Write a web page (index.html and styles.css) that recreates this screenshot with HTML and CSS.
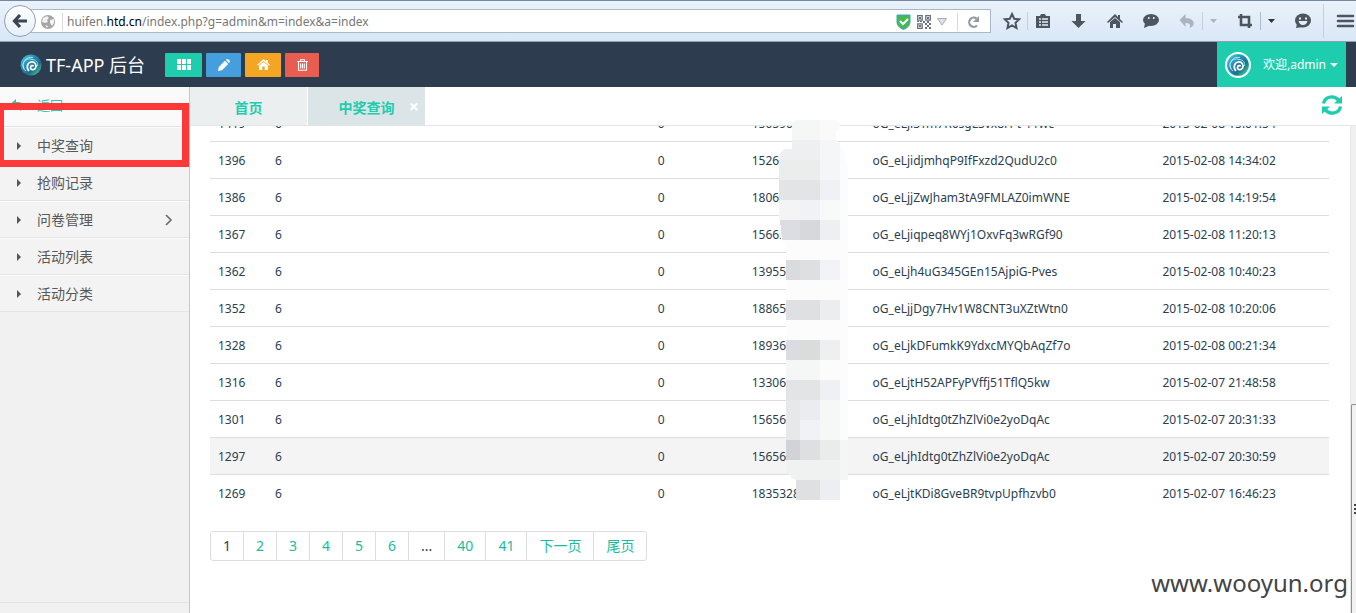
FILE: index.html
```html
<!DOCTYPE html>
<html lang="zh-CN">
<head>
<meta charset="utf-8">
<title>TF-APP 后台</title>
<link rel="stylesheet" href="styles.css">
</head>
<body>
<svg class="defs" aria-hidden="true">
  <defs>
    <linearGradient id="swirl" x1="0" y1="0" x2="1" y2="1"><stop offset="0" stop-color="#46d8e0"/><stop offset=".4" stop-color="#2a86b8"/><stop offset=".65" stop-color="#1d6f8c"/><stop offset="1" stop-color="#4fe0a0"/></linearGradient>
    <symbol id="logo" viewBox="0 0 22 22">
      <circle cx="11" cy="11" r="10.5" fill="url(#swirl)"/>
      <path d="M4 15A8 8 0 0 1 13 3.400M6 17A6.500 6.500 0 0 1 12 5.500c4 0 6 3 5.600 6.500" fill="none" stroke="#9cecea" stroke-width="1"/>
      <path d="M9 17c-3-3-2-8 2-9 4-.6 6 3 4.500 6-1.500 2.500-5 2-5-.5 0-2 2.500-2.500 3-1" fill="none" stroke="#fff" stroke-width="1.700"/>
    </symbol>
  </defs>
</svg>

<div class="browser">
  <button class="back" aria-label="后退"><svg width="16" height="16" viewBox="0 0 16 16"><path d="M8 2 2.500 8 8 14M3 8h12" fill="none" stroke="#3d4650" stroke-width="3.200"/></svg></button>
  <div class="address">
    <svg width="16" height="16" viewBox="0 0 16 16"><circle cx="8" cy="8" r="7" fill="#a5a5a5"/><path d="M3 4l4-2 2 2-2 2 1 2-3 1-3-1zM10 6l4-1v4l-2 3-2-3zM5 11l3 1-1 2z" fill="#f2f2f2"/></svg>
    <span class="rule"></span>
    <a class="url" href="#">huifen.<b>htd.cn</b>/index.php?g=admin&amp;m=index&amp;a=index</a>
    <svg width="15" height="16" viewBox="0 0 15 16"><path d="M1 1h13v7q0 5-6.500 7.500Q1 13 1 8z" fill="#46b850" stroke="#3aa5c8"/><path d="m4 7 3 3 5-5" fill="none" stroke="#fff" stroke-width="2"/></svg>
    <svg width="14" height="14" viewBox="0 0 14 14"><path d="M.7.700h4.500v4.500H.7zM8.800.700h4.500v4.500H8.800zM.7 8.800h4.500v4.500H.7z" fill="none" stroke="#68707c" stroke-width="1.300"/><path d="M2 2h2v2H2zM10 2h2v2h-2zM2 10h2v2H2zM7 0v3M6 6h2v2H6zM8 8h2v2H8zM10 6h2v2h-2zM12 8h2v2h-2zM10 10h2v2h-2zM8 12h2v2H8zM12 12h2v2h-2zM0 6h2v1H0zM3 6h2v1H3z" fill="#68707c"/></svg>
    <svg width="10" height="8" viewBox="0 0 10 8"><path d="M.5.500h9L5 7z" fill="#dfe3e8" stroke="#a5adb8"/></svg>
    <span class="rule"></span>
    <svg class="reload" width="13" height="14" viewBox="0 0 13 14"><path d="M10 10.500A4.600 4.600 0 1 1 9.500 3.500" fill="none" stroke="#919ba6" stroke-width="2.200"/><path d="M12 1v6H6z" fill="#919ba6"/></svg>
  </div>
  <svg class="tools" width="360" height="40" viewBox="996 1 360 40" fill="#4c565f">
    <path d="m1012 14 2.200 4.700 5 .6-3.700 3.500 1 5.200-4.500-2.600-4.500 2.600 1-5.200-3.700-3.500 5-.6z" fill="none" stroke="#4c565f" stroke-width="2"/>
    <path d="M1027.500 12v18M1202.500 12v18M1323.500 4v34" stroke="#c3cfdb" fill="none"/>
    <path d="M1036 16h4l1-2h4l1 2h4v12h-14z"/><path d="M1039 19h2m1 0h6m-9 3h2m1 0h6m-9 3h2m1 0h6" stroke="#e4eef8" stroke-width="1.400"/>
    <path d="M1076 14h5v7h4.500l-7 7-7-7h4.500z"/>
    <path d="m1107 22 8-8 3 3v-2h2v4l3 3-1 1-7-6-7 6zM1110 22l5-4 5 4v6h-4v-4h-3v4h-3z"/>
    <ellipse cx="1151" cy="20" rx="8" ry="6"/><path d="m1145 23-1 5 7-3z"/><path d="M1148 17h1.500v2h-1.500zM1153 17h1.500v2h-1.500z" fill="#dde9f5"/>
    <path d="m1179.500 20 6-6v4c6 0 9 3 8 7q-1 2-4 3c2-4-1-5-4-5v4z" fill="#abb4be"/>
    <path d="M1210 19h7l-3.500 4z" fill="#abb4be"/>
    <path d="M1241 14v11h11M1238 17h11v11" fill="none" stroke="#4c565f" stroke-width="2.600"/>
    <path d="M1260.500 12v18" stroke="#aebbc9" fill="none"/>
    <path d="M1268 19h7l-3.500 4z" fill="#2d343b"/>
    <ellipse cx="1303" cy="20.500" rx="8" ry="7"/><path d="m1297 24-1 4 7-1z"/><path d="M1299 17.500h2v2h-2zM1305 17.500h2v2h-2zM1298.500 21h9q-1 4-4.500 4t-4.500-4z" fill="#e4eef8"/>
    <path d="M1338 16h15M1338 21h15M1338 26h15" stroke="#4c565f" stroke-width="2.600" stroke-linecap="round"/>
  </svg>
</div>

<header class="topbar">
  <a class="brand" href="#"><svg width="22" height="22"><use href="#logo"/></svg>TF-APP 后台</a>
  <nav class="shortcuts">
    <button class="teal" aria-label="列表"><svg width="14" height="11" viewBox="0 0 14 11"><path d="M0 0h4v5H0zM5 0h4v5H5zM10 0h4v5h-4zM0 6h4v5H0zM5 6h4v5H5zM10 6h4v5h-4z" fill="#fff"/></svg></button>
    <button class="blue" aria-label="编辑"><svg width="12" height="12" viewBox="0 0 12 12"><path d="M0 12l.8-4L7 1.800 10.200 5 4 11.200zM8 1l1-1h1l2 2v1l-1 1z" fill="#fff"/></svg></button>
    <button class="orange" aria-label="首页"><svg width="13" height="11" viewBox="0 0 13 11"><path d="M0 6l6.500-6L9 2.200V1h2v3l2 2-.8.800L6.500 2 .8 6.800zM2 6.500 6.500 3 11 6.500V11H7.700V7.500H5.300V11H2z" fill="#fff"/></svg></button>
    <button class="red" aria-label="删除"><svg width="11" height="12" viewBox="0 0 11 12"><path d="M0 2.500h11M3.500 2.500V.7h4v1.800M1.500 3v8.300h8V3M3.700 4.500v5M5.500 4.500v5M7.300 4.500v5" fill="none" stroke="#fff" stroke-width="1.100"/></svg></button>
  </nav>
  <button class="user"><span class="avatar"><svg width="22" height="22"><use href="#logo"/></svg></span><span>欢迎,admin</span><span class="caret"></span></button>
</header>

<div class="shell">
  <aside class="sidebar">
    <a class="return" href="#"><svg width="14" height="12" viewBox="0 0 14 12"><path d="M0 4.500 5 0v3c6 0 9 2 8 5-.5 2-2 3-4 4 2-4 0-5-4-5v2.500z" fill="#1ecdae"/></svg><span>返回</span></a>
    <a class="item" href="#"><i></i><span>中奖查询</span></a>
    <a class="item" href="#"><i></i><span>抢购记录</span></a>
    <a class="item" href="#"><i></i><span>问卷管理</span><svg width="8" height="12" viewBox="0 0 8 12"><path d="m1 1 5 5-5 5" fill="none" stroke="#6a6a6a" stroke-width="1.600"/></svg></a>
    <a class="item" href="#"><i></i><span>活动列表</span></a>
    <a class="item" href="#"><i></i><span>活动分类</span></a>
    <div class="foot"></div>
    <div class="marker"></div>
  </aside>

  <main class="main">
    <div class="tabs">
      <a class="tab" href="#">首页</a>
      <a class="tab active" href="#">中奖查询<span class="close">×</span></a>
      <button class="refresh" aria-label="刷新"><svg width="22" height="20" viewBox="0 0 22 20"><path d="M2.500 8.500C4 1 13 0 17.500 5M19.500 11.500C18 19 9 20 4.500 15" fill="none" stroke="#1ecdae" stroke-width="3.400"/><path d="M21 1v7.500h-8zM1 19v-7.500h8z" fill="#1ecdae"/></svg></button>
    </div>
    <div class="view">
      <div class="content">
        <table>
          <colgroup><col class="c-id"><col class="c-num"><col class="c-zero"><col class="c-phone"><col class="c-open"><col class="c-date"></colgroup>
          <tbody>
          <tr><td>1419</td><td>6</td><td>0</td><td>150590</td><td>oG_eLji3Tm7R6sgL3vx8H-t-11wc</td><td>2015-02-08 15:01:54</td></tr>
          <tr><td>1396</td><td>6</td><td>0</td><td>1526</td><td>oG_eLjidjmhqP9IfFxzd2QudU2c0</td><td>2015-02-08 14:34:02</td></tr>
          <tr><td>1386</td><td>6</td><td>0</td><td>1806</td><td>oG_eLjjZwJham3tA9FMLAZ0imWNE</td><td>2015-02-08 14:19:54</td></tr>
          <tr><td>1367</td><td>6</td><td>0</td><td>15663</td><td>oG_eLjiqpeq8WYj1OxvFq3wRGf90</td><td>2015-02-08 11:20:13</td></tr>
          <tr><td>1362</td><td>6</td><td>0</td><td>13955</td><td>oG_eLjh4uG345GEn15AjpiG-Pves</td><td>2015-02-08 10:40:23</td></tr>
          <tr><td>1352</td><td>6</td><td>0</td><td>18865</td><td>oG_eLjjDgy7Hv1W8CNT3uXZtWtn0</td><td>2015-02-08 10:20:06</td></tr>
          <tr><td>1328</td><td>6</td><td>0</td><td>18936</td><td>oG_eLjkDFumkK9YdxcMYQbAqZf7o</td><td>2015-02-08 00:21:34</td></tr>
          <tr><td>1316</td><td>6</td><td>0</td><td>13306</td><td>oG_eLjtH52APFyPVffj51TflQ5kw</td><td>2015-02-07 21:48:58</td></tr>
          <tr><td>1301</td><td>6</td><td>0</td><td>15656</td><td>oG_eLjhIdtg0tZhZlVi0e2yoDqAc</td><td>2015-02-07 20:31:33</td></tr>
          <tr class="hover"><td>1297</td><td>6</td><td>0</td><td>15656</td><td>oG_eLjhIdtg0tZhZlVi0e2yoDqAc</td><td>2015-02-07 20:30:59</td></tr>
          <tr><td>1269</td><td>6</td><td>0</td><td>1835328</td><td>oG_eLjtKDi8GveBR9tvpUpfhzvb0</td><td>2015-02-07 16:46:23</td></tr>
          </tbody>
        </table>
        <nav class="pager"><span>1</span><a href="#">2</a><a href="#">3</a><a href="#">4</a><a href="#">5</a><a href="#">6</a><span>...</span><a href="#">40</a><a href="#">41</a><a href="#">下一页</a><a href="#">尾页</a></nav>
      </div>
      <div class="scrollbar"><div class="thumb"></div></div>
    </div>
    <svg class="mosaic" width="69" height="380" viewBox="779 120 69 380" shape-rendering="crispEdges">
      <path d="M792 124q1-4 5-4h38q5 1 5 7l-4 5v8l4 4 4 8 4 15v313h-53l-9-12V242h-4l-3-9V155q3-6 8-6h5z" fill="#fcfcfc"/>
      <path d="M792 124q1-4 5-4h23v20h-28z" fill="#f5f6f6"/><path d="M820 120h15q5 1 5 7l-4 5v8h-16z" fill="#fafafa"/>
      <path d="M792 140h28v20h-41v-5q3-6 8-6h5z" fill="#eeeff0"/><path d="M820 140h16l4 4v36h-20z" fill="#f5f6f8"/>
      <path d="M779 160h41v20h-41z" fill="#ebeded"/><path d="M779 180h41v20h-41z" fill="#e3e4e6"/><path d="M820 180h20v20h-20z" fill="#f0f1f4"/>
      <path d="M779 200h21v20h-21z" fill="#f4f4f4"/><path d="M800 200h20v20h-20z" fill="#f1f2f5"/><path d="M820 200h20v20h-20z" fill="#f8faf9"/>
      <path d="M780 220h20v20h-18z" fill="#dcdde2"/><path d="M800 220h20v20h-20z" fill="#d7d8dc"/><path d="M820 220h20v20h-20z" fill="#eeeff1"/>
      <path d="M786 260h14v20h-14z" fill="#dadbdc"/><path d="M800 260h20v20h-20z" fill="#dedfe0"/><path d="M820 260h20v20h-20z" fill="#f2f3f6"/>
      <path d="M786 300h34v20h-34z" fill="#dfe0e1"/><path d="M820 300h20v20h-20z" fill="#ecedef"/>
      <path d="M786 340h14v20h-14z" fill="#dbdce1"/><path d="M800 340h20v20h-20z" fill="#dadbdb"/><path d="M820 340h20v20h-20z" fill="#eeeff1"/>
      <path d="M786 360h34v20h-34z" fill="#f5f6f6"/><path d="M786 380h34v20h-34z" fill="#e3e4e6"/><path d="M820 380h20v20h-20z" fill="#eff0f3"/>
      <path d="M786 400h14v40h-14z" fill="#e7e8ea"/><path d="M800 400h20v20h-20z" fill="#ebecef"/><path d="M800 420h20v20h-20z" fill="#f1f2f6"/><path d="M820 400h20v40h-20z" fill="#f6f7f7"/>
      <path d="M786 440h14v20h-14z" fill="#d2d3d7"/><path d="M800 440h20v20h-20z" fill="#dedfe1"/><path d="M820 440h20v20h-20z" fill="#eaeceb"/><path d="M840 440h8v40h-8z" fill="#f5f5f5"/>
      <path d="M786 460h54v20h-44q-9-4-10-12z" fill="#f0f1f1"/>
      <path d="M796 480h24v20h-24z" fill="#dfe0e2"/><path d="M820 480h20v20h-20z" fill="#edeef1"/><path d="M840 480h8v20h-8z" fill="#fff"/>
    </svg>
    <div class="watermark">www.wooyun.org</div>
  </main>
</div>
</body>
</html>
```
FILE: styles.css
```css
* { box-sizing: border-box; }
body {
  margin: 0;
  height: 100vh;
  display: flex;
  flex-direction: column;
  overflow: hidden;
  background: #fff;
  color: #2c3e50;
  font: 12px/20px "Noto Sans", "Noto Sans CJK SC", sans-serif;
}
a { color: inherit; text-decoration: none; }
button { border: 0; padding: 0; margin: 0; font: inherit; color: inherit; background: none; }
svg { display: block; flex: none; }
.defs { position: absolute; width: 0; height: 0; }

.browser {
  flex: none;
  height: 42px;
  display: flex;
  align-items: center;
  padding-left: 4px;
  border-top: 1px solid #7288a5;
  border-bottom: 1px solid #8fa1b5;
  background: linear-gradient(#eaf2fb, #d9e7f6);
}
.back {
  flex: none;
  z-index: 1;
  width: 32px;
  height: 32px;
  display: grid;
  place-items: center;
  border: 1px solid #8fa0b4;
  border-radius: 50%;
  background: linear-gradient(#fff, #e6eff9);
}
.address {
  flex: 1;
  height: 24px;
  display: flex;
  align-items: center;
  gap: 6px;
  margin: 0 5px 0 -6px;
  padding: 2px 10px 0 9px;
  border: 1px solid #a9b9cb;
  background: #fff;
}
.rule { width: 1px; height: 18px; background: #d5d9de; }
.rule + .url { margin-left: -2px; }
.url + svg + svg + svg + .rule { margin-left: 4px; }
.reload { margin-left: 3px; }
.url { flex: 1; color: #777; }
.url b { color: #000; font-weight: 400; }

.topbar {
  flex: none;
  height: 45px;
  display: flex;
  align-items: center;
  padding: 0 10px 0 20px;
  background: #2d3c4e;
  color: #fff;
}
.brand { display: flex; align-items: center; gap: 4px; width: 145px; font-size: 18px; white-space: nowrap; }
.shortcuts { display: flex; gap: 4px; }
.shortcuts button { height: 24px; width: 36px; display: grid; place-items: center; border-radius: 1px; }
.shortcuts .teal { background: #1ecdae; width: 37px; }
.shortcuts .blue { background: #459fdf; width: 35px; }
.shortcuts .orange { background: #f5a524; }
.shortcuts .red { background: #e95d50; width: 34px; }
.user { display: flex; align-items: center; height: 100%; margin-left: auto; padding: 0 8px; background: #1ecdae; font-size: 12px; white-space: nowrap; }
.avatar { margin-right: 12px; border: 2px solid #fff; border-radius: 50%; }
.caret { margin-left: 4px; border: 4px solid transparent; border-top-color: #fff; border-bottom: 0; }

.shell { flex: 1; min-height: 0; display: flex; }
.sidebar {
  position: relative;
  flex: none;
  width: 190px;
  display: flex;
  flex-direction: column;
  border-right: 1px solid #c8c8c8;
  background: #f1f1f1;
  color: #585858;
  font-size: 14px;
}
.return { display: flex; align-items: center; gap: 12px; height: 40px; padding: 0 0 4px 11px; border-bottom: 1px solid #e3e3e3; background: #fafafa; color: #1ecdae; font-size: 13px; }
.item { display: flex; align-items: center; height: 37px; padding: 0 16px 0 17px; border-top: 1px solid #fcfcfc; border-bottom: 1px solid #e3e3e3; background: #f3f3f3; }
.item i { width: 20px; }
.item i::before { content: ""; display: block; width: 0; border: 4px solid transparent; border-left-color: #555; border-right: 0; }
.item svg { margin-left: auto; }
.foot { margin-top: auto; height: 11px; border-top: 1px solid #e3e3e3; }
.marker { position: absolute; left: -2px; right: 0; top: 16px; height: 64px; border: 7px solid #fd3838; border-left-width: 6px; }

.main { position: relative; flex: 1; min-width: 0; display: flex; flex-direction: column; }
.tabs { flex: none; display: flex; height: 39px; padding-right: 13px; border-bottom: 1px solid #e3e5e5; gap: 1px; }
.tab { position: relative; width: 117px; line-height: 41px; text-align: center; background: #ebefef; color: #1ecdae; font-size: 14px; font-weight: 700; }
.tab.active { background: #dbe4e6; }
.close { position: absolute; right: 6px; top: 0; color: #fff; font-size: 18px; line-height: 38px; }
.refresh { margin-left: auto; padding-bottom: 2px; }
.view { flex: 1; min-height: 0; display: flex; overflow: hidden; }
.content { flex: 1; min-width: 0; padding: 0 21px 0 20px; }
table { width: 100%; margin-top: -22px; border-collapse: collapse; table-layout: fixed; font-size: 12px; }
td { height: 37px; padding: 2px 8px 0; border-top: 1px solid #ddd; white-space: nowrap; }
.hover { background: #f4f4f4; }
.c-id { width: 5.100%; }
.c-num { width: 34.200%; }
.c-zero { width: 8.400%; }
.c-phone { width: 10.800%; }
.c-open { width: 25.900%; }
.pager { display: flex; width: max-content; margin-top: 19px; border: 1px solid #ddd; border-radius: 3px; font-size: 14px; line-height: 28px; }
.pager > * { padding: 0 12px; }
.pager > * + * { border-left: 1px solid #ddd; }
.pager a { color: #1abc9c; }
.scrollbar { flex: none; width: 6px; display: flex; flex-direction: column; background: #f0f0f0; border-left: 1px solid #e6e6e6; }
.thumb { margin-top: auto; height: 43%; border: 1px solid #8e8e8e; border-right: 0; border-bottom: 0; border-top-left-radius: 2px; background: repeating-linear-gradient(#444 0 2px, #f2f2f2 2px 4px) right center / 2px 10px no-repeat #f2f2f2; }
.mosaic { position: absolute; left: 589px; top: 33px; }
.watermark { position: absolute; right: 8px; bottom: 12px; color: #444; font-size: 24px; line-height: 36px; }
```
